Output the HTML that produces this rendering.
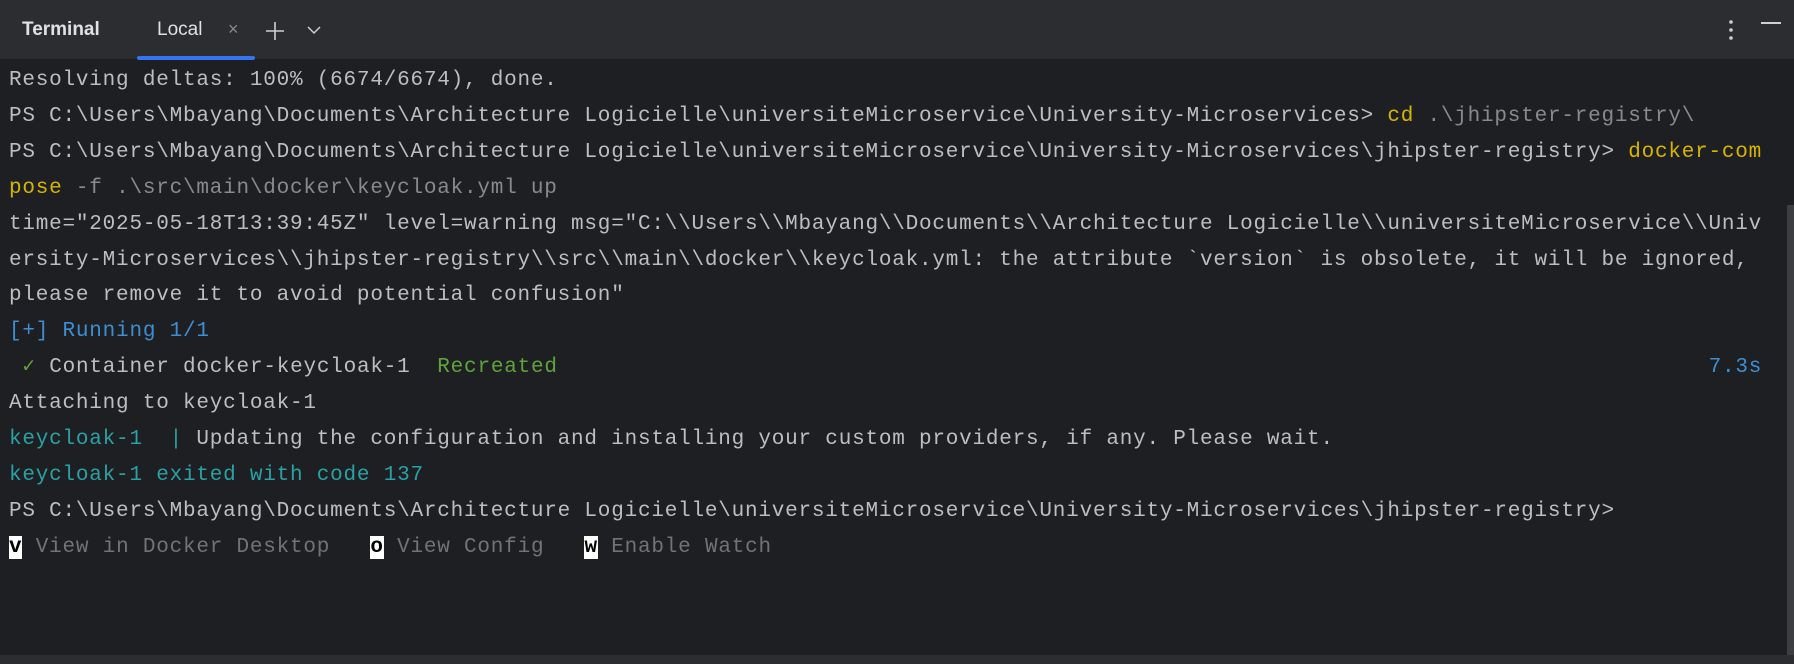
<!DOCTYPE html>
<html><head><style>
body{margin:0;width:1794px;height:664px;background:#1e1f22;overflow:hidden;position:relative;font-family:"Liberation Sans",sans-serif}
.hdr{position:absolute;left:0;top:0;width:1794px;height:59px;background:#2b2d30;border-bottom:1px solid #1e1f22}
.t{position:absolute;top:19px;font-size:19px;color:#dfe1e5}
.term{position:absolute;left:9px;top:63px;font-family:"Liberation Mono",monospace;font-size:21px;letter-spacing:0.78px;line-height:35.9px;color:#bcbec4;white-space:pre}
.y{color:#d6b500}.g{color:#868a91}.b{color:#3d8fd1}.gr{color:#5fa43b}.c{color:#2aa1a4}.d{color:#6f737a}
.k{background:#fff;color:#000;font-weight:bold}
</style></head><body>
<div class="hdr">
<div class="t" style="left:22px;font-weight:bold">Terminal</div>
<div class="t" style="left:157px">Local</div>
<div class="t" style="left:228px;color:#868a91;font-size:18px">×</div>
<svg style="position:absolute;left:264px;top:20px" width="22" height="22"><path d="M11 2V20M2 11H20" stroke="#ced0d6" stroke-width="1.6"/></svg>
<svg style="position:absolute;left:306px;top:24px" width="16" height="12"><path d="M2 3L8 9L14 3" stroke="#ced0d6" stroke-width="1.5" fill="none"/></svg>
<div style="position:absolute;left:137px;top:56px;width:118px;height:4px;border-radius:2px;background:#3574f0"></div>
<svg style="position:absolute;left:1727px;top:18px" width="8" height="24"><circle cx="4" cy="4" r="1.8" fill="#ced0d6"/><circle cx="4" cy="12" r="1.8" fill="#ced0d6"/><circle cx="4" cy="20" r="1.8" fill="#ced0d6"/></svg>
<div style="position:absolute;left:1761px;top:22px;width:20px;height:2px;background:#ced0d6"></div>
</div>
<div style="position:absolute;left:1787px;top:205px;width:7px;height:450px;background:#3c3e41"></div>
<div style="position:absolute;left:0;top:655px;width:1794px;height:9px;background:#2b2d30"></div>
<div class="term">Resolving deltas: 100% (6674/6674), done.
PS C:\Users\Mbayang\Documents\Architecture Logicielle\universiteMicroservice\University-Microservices> <span class="y">cd</span> <span class="g">.\jhipster-registry\</span>
PS C:\Users\Mbayang\Documents\Architecture Logicielle\universiteMicroservice\University-Microservices\jhipster-registry> <span class="y">docker-com</span>
<span class="y">pose</span> <span class="g">-f .\src\main\docker\keycloak.yml up</span>
time="2025-05-18T13:39:45Z" level=warning msg="C:\\Users\\Mbayang\\Documents\\Architecture Logicielle\\universiteMicroservice\\Univ
ersity-Microservices\\jhipster-registry\\src\\main\\docker\\keycloak.yml: the attribute `version` is obsolete, it will be ignored,
please remove it to avoid potential confusion"
<span class="b">[+] Running 1/1</span>
 <span class="gr">✓</span> Container docker-keycloak-1  <span class="gr">Recreated</span>                                                                                      <span class="b">7.3s</span>
Attaching to keycloak-1
<span class="c">keycloak-1  |</span> Updating the configuration and installing your custom providers, if any. Please wait.
<span class="c">keycloak-1 exited with code 137</span>
PS C:\Users\Mbayang\Documents\Architecture Logicielle\universiteMicroservice\University-Microservices\jhipster-registry>
<span class="k">v</span> <span class="d">View in Docker Desktop</span>   <span class="k">o</span> <span class="d">View Config</span>   <span class="k">w</span> <span class="d">Enable Watch</span></div>
</body></html>
